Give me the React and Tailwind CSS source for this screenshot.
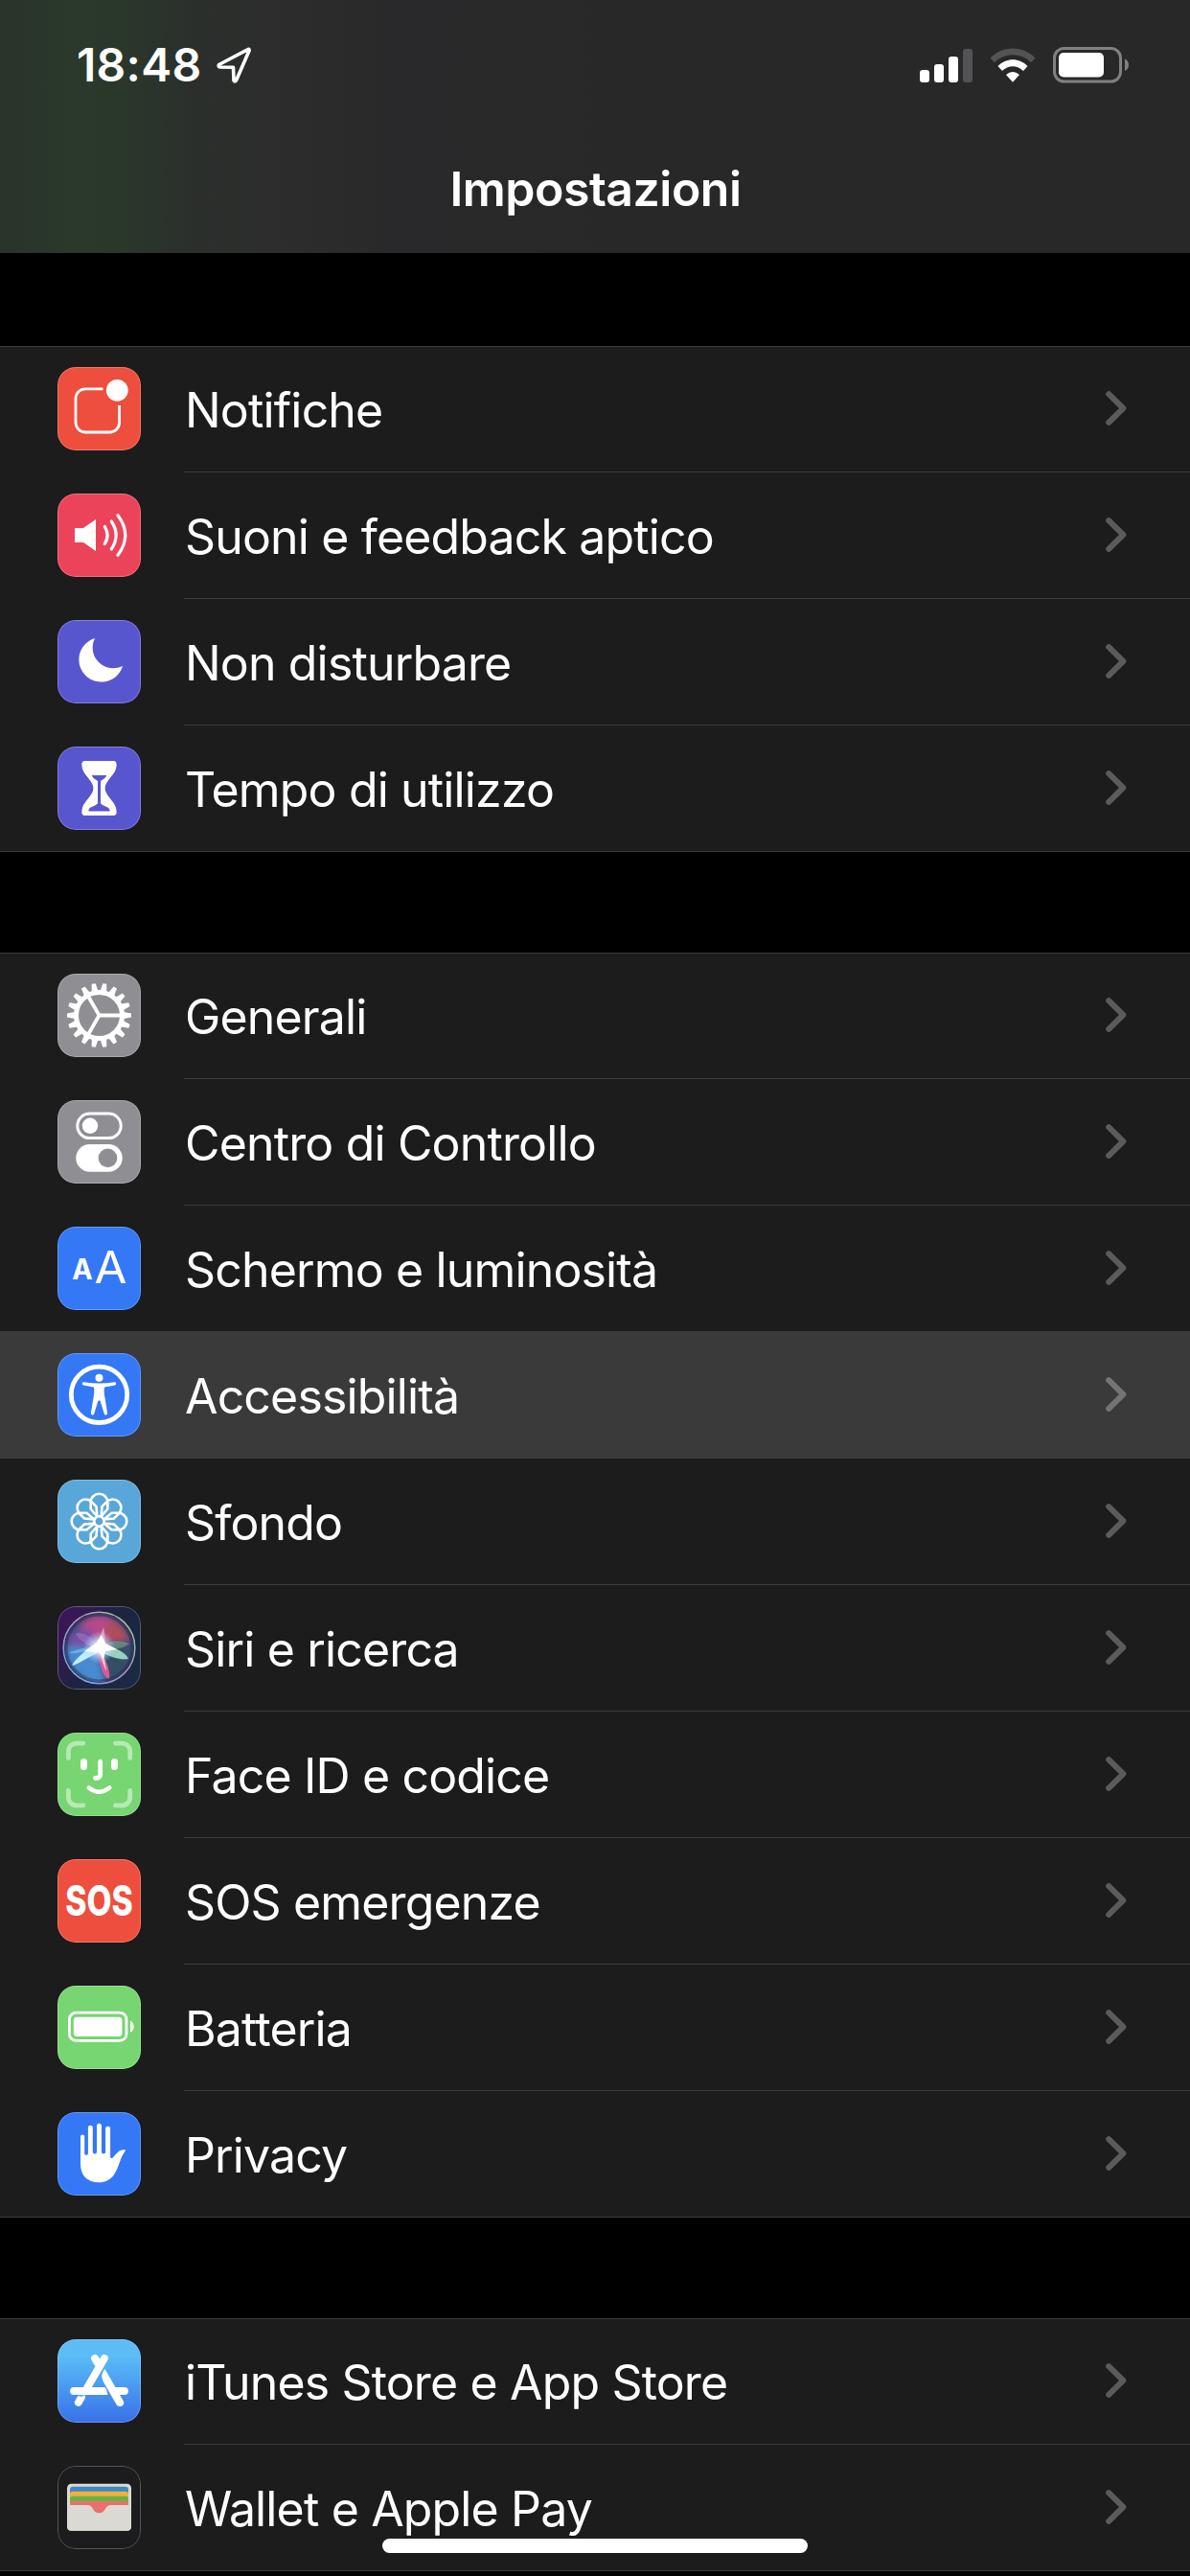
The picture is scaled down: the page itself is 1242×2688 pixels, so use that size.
import clsx from 'clsx';

const GEAR_TEETH = Array.from({ length: 18 }, (_, i) => i * 20);
const PETALS = Array.from({ length: 8 }, (_, i) => i * 45);

function Tile({ className, children }) {
  return (
    <div className={clsx('relative size-[87px] shrink-0 overflow-hidden rounded-[19px]', className)}>
      <svg viewBox="0 0 87 87" className="block size-full">
        {children}
      </svg>
      <div className="absolute inset-0 rounded-[19px] border border-white/25" />
    </div>
  );
}

function NotificationsIcon() {
  return (
    <Tile className="bg-[#ed4e3d]">
      <path d="M47.5 22.9H29a10 10 0 0 0-10 10V58a10 10 0 0 0 10 10h25.6a10 10 0 0 0 10-10V40" fill="none" stroke="#fff" strokeWidth="2.8" />
      <circle cx="62.3" cy="24.3" r="11.4" fill="#fff" />
    </Tile>
  );
}

function SoundIcon() {
  return (
    <Tile className="bg-[#eb445a]">
      <path d="M18 36h9l13-9v33l-13-9h-9z" fill="#fff" />
      <g fill="none" stroke="#fff" strokeWidth="3.2" strokeLinecap="round">
        <path d="M49.3 34.5Q55 43.5 49.3 52.5" />
        <path d="M56.3 29Q66 43.5 56.3 58" />
        <path d="M63 22.7Q78.5 43.5 63 64.3" />
      </g>
    </Tile>
  );
}

function MoonIcon() {
  return (
    <Tile className="bg-[#5856ce]">
      <path d="M39 19A23.3 23.3 0 1 0 68 48A21.6 21.6 0 0 1 39 19z" fill="#fff" />
    </Tile>
  );
}

function HourglassIcon() {
  return (
    <Tile className="bg-[#5856ce]">
      <path
        d="M29 15h29c3 0 4 2 3.6 5-.6 10-12 15-12 23.5S61 57 61.6 67c.4 3-.6 5-3.6 5H29c-3 0-4-2-3.6-5 .6-10 12-15 12-23.5S26 30 25.4 20c-.4-3 .6-5 3.6-5z"
        fill="#fff"
      />
      <path d="M35.7 30h15.6c-1 3-4 4-6.2 6v23.5c2 2.5 8 3 9.4 6.5v1.5h-22V66c1.4-3.5 7.5-4 9.5-6.5V36c-2.3-2-5.3-3-6.3-6z" fill="#5856ce" />
    </Tile>
  );
}

function GearIcon() {
  return (
    <Tile className="bg-[#8e8e93]">
      <g transform="translate(43.5 43.5)">
        <circle r="24" fill="none" stroke="#fff" strokeWidth="5" />
        {GEAR_TEETH.map((a) => (
          <path key={a} d="M-3.4-25.5L-2-33.5h4L3.4-25.5z" fill="#fff" transform={`rotate(${a + 90})`} />
        ))}
        <path d="M0 0H23M0 0L-11.5-20M0 0L-11.5 20" stroke="#fff" strokeWidth="3.8" />
      </g>
    </Tile>
  );
}

function ControlsIcon() {
  return (
    <Tile className="bg-[#8e8e93]">
      <rect x="20.8" y="14" width="45.4" height="25.6" rx="12.8" fill="none" stroke="#fff" strokeWidth="3" />
      <circle cx="34" cy="26.8" r="8.2" fill="#fff" />
      <rect x="19.3" y="46" width="48.4" height="28.8" rx="14.4" fill="#fff" />
      <circle cx="52.5" cy="60.4" r="9.8" fill="#8e8e93" />
    </Tile>
  );
}

function DisplayIcon() {
  return (
    <Tile className="bg-[#3478f6]">
      <text x="15.3" y="54.6" fontSize="30" fontWeight="700" textLength="21.5" lengthAdjust="spacingAndGlyphs" fill="#fff">A</text>
      <text x="38.5" y="58.6" fontSize="47" fontWeight="400" textLength="34" lengthAdjust="spacingAndGlyphs" fill="#fff">A</text>
    </Tile>
  );
}

function AccessibilityIcon() {
  return (
    <Tile className="bg-[#3478f6]">
      <circle cx="43.5" cy="43.3" r="29.2" fill="none" stroke="#fff" strokeWidth="4.8" />
      <circle cx="43.5" cy="25.7" r="4" fill="#fff" />
      <path
        d="M27.5 30.3C38 32 49 32 59.5 30.3c2-.2 2.3 2.7.3 3.2L49 35.5c-.8 4 0 8 .5 11l2.6 16c.3 2.2-2.8 2.8-3.3.7L44.5 49.5h-2L38.2 63.2c-.5 2.1-3.6 1.5-3.3-.7l2.6-16c.5-3 1.3-7 .5-11l-10.8-2c-2-.5-1.7-3.4.3-3.2z"
        fill="#fff"
      />
    </Tile>
  );
}

function WallpaperIcon() {
  return (
    <Tile className="bg-[#59a7d8]">
      <g transform="translate(43.5 43.5)" fill="none" stroke="#fff" strokeWidth="2.6">
        {PETALS.map((a) => (
          <path key={a} d="M-2-5L-8.8-13V-20A8.8 8.8 0 0 1 8.8-20V-13L2-5" transform={`rotate(${a})`} />
        ))}
        <circle r="5.2" />
      </g>
    </Tile>
  );
}

function SiriIcon() {
  return (
    <Tile className="bg-[#1c2145]">
      <defs>
        <linearGradient id="siri-bg" x1="0" y1="0" x2="1" y2="0.6">
          <stop offset="0" stopColor="#40145c" />
          <stop offset="0.6" stopColor="#1d2340" />
          <stop offset="1" stopColor="#1a2a42" />
        </linearGradient>
        <linearGradient id="siri-ring" x1="0" y1="1" x2="1" y2="0">
          <stop offset="0" stopColor="#5ab4f0" />
          <stop offset="0.5" stopColor="#b48cc8" />
          <stop offset="1" stopColor="#8fdc9a" />
        </linearGradient>
        <radialGradient id="siri-core">
          <stop offset="0" stopColor="#fff" />
          <stop offset="0.35" stopColor="#e4f6ff" stopOpacity="0.8" />
          <stop offset="1" stopColor="#9fd8ff" stopOpacity="0" />
        </radialGradient>
        <filter id="siri-soft" x="-30%" y="-30%" width="160%" height="160%">
          <feGaussianBlur stdDeviation="3.5" />
        </filter>
        <filter id="siri-edge">
          <feGaussianBlur stdDeviation="0.6" />
        </filter>
        <clipPath id="siri-orb">
          <circle cx="43.5" cy="43.5" r="36" />
        </clipPath>
      </defs>
      <rect width="87" height="87" fill="url(#siri-bg)" />
      <g clipPath="url(#siri-orb)">
        <circle cx="43.5" cy="43.5" r="37" fill="#3c4a78" />
        <g filter="url(#siri-soft)">
          <path d="M22 22C32 6 54 6 66 20L74 36L43 40z" fill="#b84888" />
          <path d="M54 14C66 16 74 28 75 36L50 36z" fill="#b04e5a" />
          <path d="M10 30L34 22L43 44L14 46z" fill="#7450a6" />
          <path d="M8 42L43 44L50 82C30 86 10 68 8 44z" fill="#488ad0" />
          <path d="M45 44L76 40C76 56 70 70 56 76z" fill="#335062" />
        </g>
        <g filter="url(#siri-edge)">
          <path d="M44 44C54 34 66 36 75 39C68 45 56 46 44 46z" fill="#6aa890" opacity="0.6" />
          <path d="M43 39C58 42 72 48 74 55C64 57 52 51 43 47z" fill="#a5dcc8" opacity="0.9" />
          <path d="M41 44C49 50 56 68 54 76C48 76 45 62 40 46z" fill="#d65a96" />
          <path d="M43 44C45 54 48 62 51 68C50 58 48 50 46 44z" fill="#f2c4dc" />
          <path d="M38 44C43 34 46 28 48 22C50 30 50 38 49 46z" fill="#e8a0c4" opacity="0.9" />
          <path d="M44 48C32 53 22 60 15 62.5C17 56 30 46 40 38z" fill="#bdeeff" />
          <path d="M44 44C36 30 24 26 19 29C22 36 34 42 44 46z" fill="#9a7cc4" opacity="0.55" />
          <path d="M44 45C32 46 20 50 12 49C20 45 32 42 44 42z" fill="#6cc4ec" opacity="0.7" />
        </g>
        <circle cx="43.5" cy="43" r="17" fill="url(#siri-core)" />
        <path d="M28 47l12-8 6-9 4 9 12 6-12 2-2 8-5-7z" fill="#fff" filter="url(#siri-edge)" />
      </g>
      <circle cx="43.5" cy="43.5" r="34.5" fill="none" stroke="#161a3a" strokeOpacity="0.35" strokeWidth="3" />
      <circle cx="43.5" cy="43.5" r="37.3" fill="none" stroke="url(#siri-ring)" strokeWidth="1.5" />
    </Tile>
  );
}

function FaceIdIcon() {
  return (
    <Tile className="bg-[#77d572]">
      <g fill="none" strokeLinecap="round">
        <path
          d="M11.4 26.5V19.5a8.4 8.4 0 0 1 8.4-8.4H26.8M60.5 11.1H67.3a8.4 8.4 0 0 1 8.4 8.4V26.5M75.7 60.5v7a8.4 8.4 0 0 1-8.4 8.4H60.5M26.8 75.9H19.8a8.4 8.4 0 0 1-8.4-8.4V60.5"
          stroke="#b6eab4"
          strokeWidth="4.8"
        />
        <path d="M27.5 30.5v5M59.5 30.5v5" stroke="#fff" strokeWidth="7" />
        <path d="M44.7 30.2V43.5Q44.7 47.5 39.5 47.5" stroke="#fff" strokeWidth="4.8" />
        <path d="M32.8 57.5Q43.5 66 54.2 57.5" stroke="#fff" strokeWidth="4.6" />
      </g>
    </Tile>
  );
}

function SosIcon() {
  return (
    <Tile className="bg-[#ed4e3d]">
      <text transform="translate(43.5 59.4) scale(0.775 1)" textAnchor="middle" fontSize="43.5" fontWeight="800" fill="#fff">SOS</text>
    </Tile>
  );
}

function BatteryIcon() {
  return (
    <Tile className="bg-[#77d572]">
      <rect x="12.4" y="28.2" width="59.6" height="29.2" rx="7" fill="none" stroke="#fff" strokeWidth="2.8" />
      <rect x="16.8" y="32.7" width="50.6" height="20.2" rx="3.5" fill="#fff" />
      <path d="M76 36.8c5 2 5 10 0 12z" fill="#fff" />
    </Tile>
  );
}

function HandIcon() {
  return (
    <Tile className="bg-[#3478f6]">
      <path
        d="M24 25.5a2.1 2.1 0 0 1 4.2 0V43a1.8 1.8 0 0 0 3.7 0V16.2a2.4 2.4 0 0 1 4.9 0V41.5a2 2 0 0 0 4.2 0V14.3a2.5 2.5 0 0 1 5 0V41.5a2 2 0 0 0 4.1 0V17.2a2.5 2.5 0 0 1 5 0V46c0 2.5 2 2.8 3.4.8C62 42 66 38 71 39.5c0 2-2.5 3-4.5 8.5C62 60 59 73.3 43 73.3C30 73.3 24 65 24 54z"
        fill="#fff"
      />
    </Tile>
  );
}

function AppStoreIcon() {
  return (
    <Tile className="bg-linear-to-b from-[#5bbcf6] from-20% to-[#3a70e8]">
      <g fill="none" stroke="#fff" strokeWidth="7.8" strokeLinecap="round">
        <path d="M39 19.8L42 25" />
        <path d="M49 19.8L29 54" />
        <path d="M17 54H47" />
        <path d="M25 60.5L21.8 66" />
        <path d="M60 54H70" />
      </g>
      <path d="M44 50.1H49.5Q52 53 52.5 57.9H44z" fill="#fff" />
      <path d="M49.5 31C45.5 35.5 45.5 40 48.5 45.5L61.5 68C64.5 72.5 71 69 68.8 64.5z" fill="#fff" />
      <path d="M16 58.3H30Q27.5 58.5 25 59.8z" fill="#4484ec" />
    </Tile>
  );
}

function WalletIcon() {
  return (
    <Tile className="bg-[#1c1c1e]">
      <rect x="10" y="18.7" width="67" height="49" rx="4.5" fill="#dad9d4" />
      <path d="M13 41V25q0-3.3 3.3-3.3H70.7q3.3 0 3.3 3.3V41z" fill="#3e88c6" />
      <path d="M13 41V29.5q0-2.8 3-2.8H71q3 0 3 2.8V41z" fill="#f2af3c" />
      <path d="M13 41V34.5q0-2.8 3-2.8H71q3 0 3 2.8V41z" fill="#66b345" />
      <path d="M13 41V39.5q0-2.8 3-2.8H71q3 0 3 2.8V41z" fill="#e9706b" />
      <path d="M10 41H77V63.2q0 4.5-4.5 4.5H14.5q-4.5 0-4.5-4.5z" fill="#dad9d4" />
      <path d="M31 40.8c7 .3 5 8.5 12.4 8.5S49 41.1 56 40.8z" fill="#e9706b" />
    </Tile>
  );
}

function Chevron({ selected }) {
  return (
    <svg viewBox="0 0 22 36" className="-mt-0.5 h-9 w-[22px] shrink-0">
      <path
        d="M3.2 3.2L18.3 18L3.2 32.8"
        fill="none"
        stroke={selected ? '#747476' : '#5b5b5e'}
        strokeWidth="6"
        strokeLinecap="round"
        strokeLinejoin="round"
      />
    </svg>
  );
}

const groups = [
  [
    { label: 'Notifiche', Icon: NotificationsIcon },
    { label: 'Suoni e feedback aptico', Icon: SoundIcon },
    { label: 'Non disturbare', Icon: MoonIcon },
    { label: 'Tempo di utilizzo', Icon: HourglassIcon },
  ],
  [
    { label: 'Generali', Icon: GearIcon },
    { label: 'Centro di Controllo', Icon: ControlsIcon },
    { label: 'Schermo e luminosità', Icon: DisplayIcon, hideDivider: true },
    { label: 'Accessibilità', Icon: AccessibilityIcon, selected: true },
    { label: 'Sfondo', Icon: WallpaperIcon },
    { label: 'Siri e ricerca', Icon: SiriIcon },
    { label: 'Face ID e codice', Icon: FaceIdIcon },
    { label: 'SOS emergenze', Icon: SosIcon },
    { label: 'Batteria', Icon: BatteryIcon },
    { label: 'Privacy', Icon: HandIcon },
  ],
  [
    { label: 'iTunes Store e App Store', Icon: AppStoreIcon },
    { label: 'Wallet e Apple Pay', Icon: WalletIcon },
  ],
];

function Row({ label, Icon, selected, hideDivider, last }) {
  const noDivider = selected || hideDivider;

  return (
    <li
      className={clsx(
        'flex h-[132px] pl-[60px]',
        selected && 'bg-[#3a3a3a] shadow-[0_-1px_0_#3a3a3a]',
        last && 'border-b border-[#3b3b3d]'
      )}
    >
      <div className="pt-[22px]">
        <Icon />
      </div>
      <div
        className={clsx(
          'ml-[45px] flex flex-1 items-center justify-between pr-[66px]',
          !last && 'border-b',
          noDivider ? 'border-transparent' : 'border-[#3b3b3d]'
        )}
      >
        <span className="pt-[3px] pl-px text-[50px] leading-[60px] tracking-[-0.85px] whitespace-nowrap">{label}</span>
        <Chevron selected={selected} />
      </div>
    </li>
  );
}

function StatusBar() {
  return (
    <div className="flex h-[136px] items-center justify-between pr-[63px] pl-[80px]">
      <div className="flex items-center gap-[15px]">
        <span className="text-[48px] leading-none font-semibold tracking-[0.3px]">18:48</span>
        <svg viewBox="0 0 36 38" className="h-[38px] w-9">
          <path d="M33 2.5L2.5 18.5Q1.5 20.5 3.5 21L17.5 21.3L18 35Q19 37 20.5 35L34 4Q34.5 2 33 2.5z" fill="none" stroke="#fff" strokeWidth="3.6" strokeLinejoin="round" />
        </svg>
      </div>
      <div className="flex items-center gap-[18px]">
        <div className="flex h-[36px] items-end gap-[5px]">
          <div className="h-[13px] w-[10px] rounded-[3px] bg-white" />
          <div className="h-[19px] w-[10px] rounded-[3px] bg-white" />
          <div className="h-[27px] w-[10px] rounded-[3px] bg-white" />
          <div className="h-[35px] w-[10px] rounded-[3px] bg-[#535355]" />
        </div>
        <svg viewBox="0 0 48 36" className="h-9 w-12">
          <path d="M0.5 10.5C13-3 35-3 47.5 10.5L43 15.3C33 4.5 15 4.5 5 15.3z" fill="#535355" />
          <path d="M8.5 19C17 10 31 10 39.5 19L35 24C29 17.5 19 17.5 13 24z" fill="#fff" />
          <path d="M17 28Q24 22 31 28L24 35.7z" fill="#fff" />
        </svg>
        <svg viewBox="0 0 80 38" className="h-[38px] w-20">
          <rect x="1.5" y="1.5" width="69" height="34.5" rx="10" fill="none" stroke="#808080" strokeWidth="3" />
          <rect x="6" y="6" width="47" height="25.5" rx="5" fill="#fff" />
          <path d="M75 12.5c5.3 2 5.3 10.5 0 12.5z" fill="#808080" />
        </svg>
      </div>
    </div>
  );
}

export default function App() {
  return (
    <div className="relative h-[2688px] w-[1242px] overflow-hidden bg-black font-['Inter','Liberation_Sans',sans-serif] text-white">
      <header className="h-[264px] bg-[linear-gradient(90deg,#29342b_0%,#2a392c_6%,#2a382c_10%,#2b2f2c_16%,#2c2d2c_22%,#2b2b2b_28%,#29292b_34%,#282828_50%,#282829_100%)]">
        <StatusBar />
        <h1 className="pt-[31px] pl-px text-center text-[50px] leading-[60px] font-semibold tracking-[-0.5px]">Impostazioni</h1>
      </header>

      <main className="flex flex-col gap-[105px] pt-[97px]">
        {groups.map((rows, i) => (
          <ul key={i} className="bg-[#1c1c1c] shadow-[inset_0_1px_0_#3b3b3d]">
            {rows.map((row, j) => (
              <Row key={row.label} {...row} last={j === rows.length - 1} />
            ))}
          </ul>
        ))}
      </main>

      <div className="absolute top-[2649px] left-[399px] h-[15px] w-[444px] rounded-full bg-white" />
    </div>
  );
}
